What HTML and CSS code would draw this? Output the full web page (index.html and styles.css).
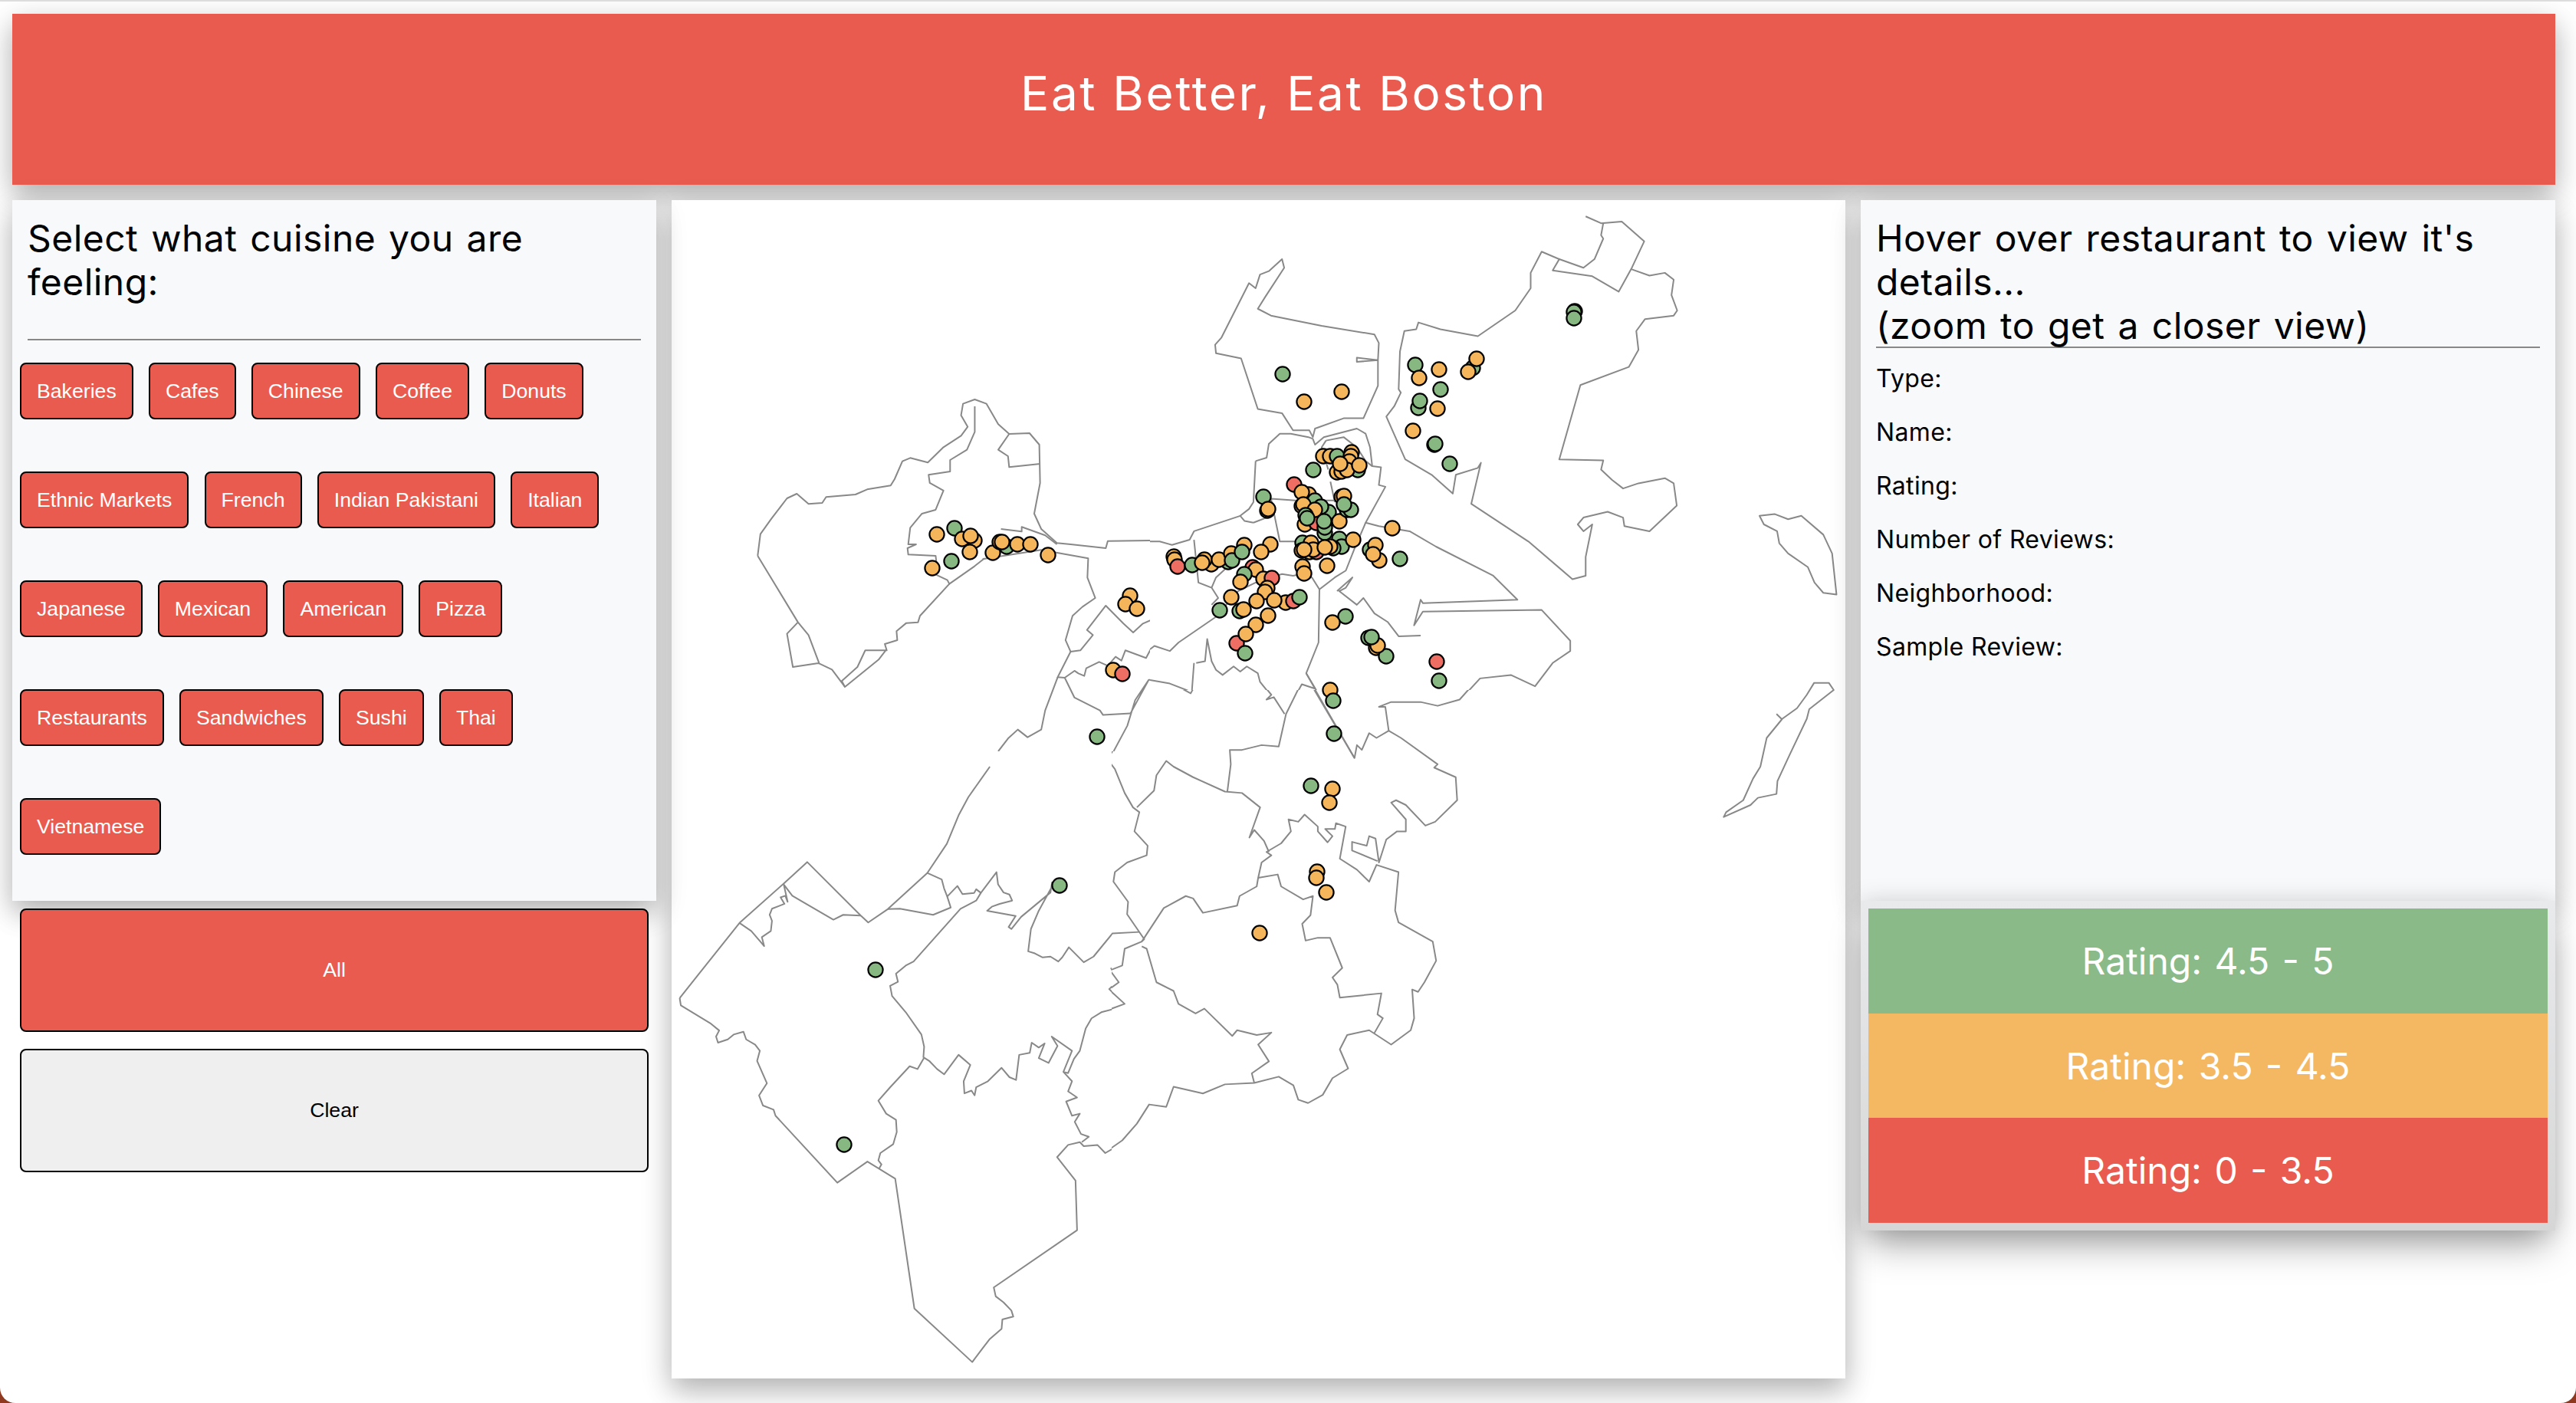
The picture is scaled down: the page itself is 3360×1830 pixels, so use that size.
FILE: index.html
```html
<!DOCTYPE html>
<html lang="en">
<head>
<meta charset="utf-8">
<title>Eat Better, Eat Boston</title>
<link rel="stylesheet" href="styles.css">
</head>
<body>
<header class="banner"><h1 class="banner-title">Eat Better, Eat Boston</h1></header>
<main class="layout">
  <section class="col">
    <div class="panel cuisine">
      <h2 class="panel-title">Select what cuisine you are feeling:</h2>
      <hr class="rule cuisine-rule">
      <div class="chips">
        <button class="chip">Bakeries</button><button class="chip">Cafes</button><button class="chip">Chinese</button><button class="chip">Coffee</button><button class="chip">Donuts</button>
        <button class="chip">Ethnic Markets</button><button class="chip">French</button><button class="chip">Indian Pakistani</button><button class="chip">Italian</button>
        <button class="chip">Japanese</button><button class="chip">Mexican</button><button class="chip">American</button><button class="chip">Pizza</button>
        <button class="chip">Restaurants</button><button class="chip">Sandwiches</button><button class="chip">Sushi</button><button class="chip">Thai</button>
        <button class="chip">Vietnamese</button>
      </div>
    </div>
    <div class="actions">
      <button class="action action-all">All</button>
      <button class="action action-clear">Clear</button>
    </div>
  </section>
  <section class="map">
    <svg class="map-svg" viewBox="876 261 1531 1537" xmlns="http://www.w3.org/2000/svg">
      <defs>
        <clipPath id="clip-sw"><rect x="860" y="980" width="590" height="830"/></clipPath>
        <clipPath id="clip-se"><rect x="1500" y="900" width="900" height="900"/><rect x="1450" y="980" width="60" height="830"/><rect x="2200" y="850" width="200" height="100"/></clipPath>
        <clipPath id="clip-w"><rect x="880" y="480" width="620" height="500"/></clipPath>
        <clipPath id="clip-ne"><rect x="1500" y="270" width="900" height="630"/></clipPath>
      </defs>
      <g clip-path="url(#clip-sw)"><g transform="translate(860 1000) scale(.5102 .5294)">
        <path class="line" d="M52 570 205 385 318 288 378 235 515 367 534 384 584 351 685 262 735 190 765 120 790 75 845 0"/>
        <path class="line" d="M685 262 722 278 728 300 736 320 762 294 775 314 805 311 810 302 822 311 862 260 866 290 880 310 895 315 902 330 870 338 850 345 838 355 911 368 893 395 900 400 925 370 1000 310 1004 285 1004 295 970 355 950 400 943 455 960 460 980 470 1000 468 1020 480 1030 470 1047 445 1085 482 1110 468 1162 407 1195 411 1228 407 1198 365 1200 345 1185 310 1160 280 1170 255 1205 230 1240 215 1247 195 1220 175 1215 150 1228 110 1218 100 1200 95 1190 65 1162 10"/>
        <path class="line" d="M1228 407 1238 425 1220 440 1185 455 1183 490 1155 497 1172 528 1150 548 1190 585 1170 595 1130 605 1105 620 1090 645 1075 700 1060 720 1045 755 1033 752 1055 700 1003 665 1018 688 995 730 970 718 985 682 970 692 952 680 947 705 920 710 912 772 895 765 875 742 840 775 810 790 806 810 798 798 780 805 778 775 795 735 765 710 728 758 710 745 690 725 677 717 660 745 640 738 590 790 560 823 580 855 605 870 607 900 598 930 565 952 560 970 568 980 562 990"/>
        <path class="line" d="M52 570 55 588 130 632 153 650 145 665 150 680 175 672 190 660 215 653 222 672 245 685 257 700 250 725 275 780 255 810 265 835 292 845 297 860 455 1025 532 973 603 1015 652 1335 800 1467 825 1435 845 1410 875 1385 877 1362 905 1355 900 1340 880 1320 860 1305 855 1283 1068 1142 1064 1020 1017 962 1045 932 1075 925 1085 935 1120 932 1140 952 1170 935 1210 895 1225 870 1250 832 1280 835 1303 840 1310 795 1330 790 1395 805 1450 785 1500 775 1520 780 1568 770"/>
        <path class="line" d="M1033 752 1055 775 1045 800 1068 815 1040 825 1055 860 1075 855 1062 875 1078 905 1098 912 1080 925"/>
        <path class="line" d="M675 717 677 690 670 660 630 605 595 565 590 540 610 530 605 510 630 490 650 480 770 350 810 330 822 311"/>
        <path class="line" d="M205 385 235 405 262 435 268 442 262 420 285 405 288 380 282 365 288 350 320 338 310 322 322 318 328 333 318 290 340 318 365 332 445 377 470 365 515 367"/>
        <path class="line" d="M584 351 615 350 700 365 745 347 736 320"/>
        <path class="line" d="M1185 452 1220 442 1240 445 1270 535 1295 540 1315 550 1320 575 1350 600 1380 605 1395 595 1400 620 1460 665 1478 650 1525 655 1565 655"/>
        <path class="line" d="M1238 425 1290 350 1350 318 1385 360 1415 357 1480 340 1490 315 1525 300 1530 258 1563 230 1550 208 1568 208"/>
        <path class="line" d="M1510 172 1525 155 1545 180 1555 205M1538 103 1510 172M1450 60 1462 65 1490 75 1538 103M1450 60 1455 25 1462 0M1295 0 1285 20 1262 50 1250 80 1220 100M1300 0 1330 10 1400 30 1450 60M1530 275 1568 268M1568 685 1530 685 1530 705 1555 730 1545 750 1515 760 1520 780"/>
      </g></g>
      <g clip-path="url(#clip-se)"><g transform="translate(1400 850) scale(.6378 .625)">
        <path class="line" d="M0 1025 30 1030 65 1045 100 1020 130 985 155 945 190 950 205 908 265 922 310 903 370 900 420 887 450 905 460 935 480 942 510 925 530 890 562 870 545 830 560 800 605 790 650 820 690 790 697 765 693 705 705 710 718 690 742 645 735 605 665 565 658 540 665 460 620 445 605 480 580 455 545 432 557 365 537 358 535 370 515 370 530 385 520 398 500 375 500 365 473 340 460 355 440 350 445 375 425 400 395 418 405 425 385 440 378 472 418 465 425 490 470 517 490 510 485 550 468 568 475 603 500 597 525 597 550 660 530 680 540 695 545 722 630 713 622 757 633 765 615 797"/>
        <path class="line" d="M378 472 375 490 340 510 335 530 265 545 245 515 230 510 185 535 140 605 145 600 110 548 112 522 82 480 85 460 110 440 150 425 152 405 125 375 135 335 122 325 105 295 85 245 70 225 105 165 118 130"/>
        <path class="line" d="M140 605 105 620 100 655 75 665 93 690 73 705 105 735 65 750 35 770 25 790 10 830 0 860"/>
        <path class="line" d="M140 615 150 620 170 690 205 708 215 735 250 755 268 745 325 802 335 790 375 800 405 795 378 820 400 855 365 880 370 900"/>
        <path class="line" d="M0 628 20 648 80 588 135 585"/>
        <path class="line" d="M130 325 165 290 170 258 190 228 205 240 245 262 310 292 345 295 382 325 360 388 370 372 390 395 400 418"/>
        <path class="line" d="M315 292 322 235 320 205 345 205 385 195 420 198 435 130 465 68 490 75 575 222"/>
        <path class="line" d="M475 45 495 0M475 45 575 222 580 195 590 205 605 170 620 180 645 165 638 115 625 115 650 105 710 105 745 113 790 100 825 60 860 45 945 72 970 30 1000 0"/>
        <path class="line" d="M645 165 670 180 745 235 738 242 782 262 785 310 740 355 720 363 680 320 660 310 650 315 680 350 680 375 662 375 640 392 625 440 618 390 605 385 600 405 570 397 570 415 622 437"/>
        <path class="line" d="M1330 345 1385 320 1400 305 1438 297 1440 270 1465 215 1500 140 1505 120 1530 100 1555 80 1545 65 1515 65 1500 90 1480 118 1450 140 1418 180 1405 240 1390 265 1370 310 1335 335ZM1448 140 1438 130"/>
        <path class="line" d="M118 130 130 80 155 60 200 65 240 87 260 50 272 25 295 45 330 30 345 35 365 30 385 50 385 65 405 90 395 100 410 95 432 130"/>
        <path class="line" d="M0 95 30 120 60 130 115 128"/>
        <path class="line" d="M0 45 25 45 55 20 90 15 105 0"/>
      </g></g>
      <g clip-path="url(#clip-w)"><g transform="translate(950 480) scale(.5102 .3333)">
        <path class="line" d="M75 735 82 650 110 590 150 510 175 492 205 532 240 528 250 505 325 495 355 475 415 460 425 435 445 365 465 352 510 370 550 310 595 265 612 230 595 185 600 140 630 123 660 140 690 220 718 258 770 255 795 300 797 450 782 570 800 630 840 685 875 690 965 705 970 677 1100 675 1105 690 1135 688 1195 660 1305 580 1340 520 1345 380 1375 345 1365 300 1385 255"/>
        <path class="line" d="M718 258 690 320 715 345 718 388 797 375"/>
        <path class="line" d="M630 150 630 250 610 320 567 360 567 405 512 418 515 450 550 480 530 555 495 570 465 625 460 690 480 690 458 705 460 730 530 735 533 775 505 790 560 830 565 845 630 775 655 745"/>
        <path class="line" d="M697 630 750 640 750 622 810 655 840 690M650 748 800 712 920 745 918 820 938 900 905 935 880 970 862 1065 875 1110 900 1105 932 1045 917 1025 965 930 1010 1000 1035 1035 1060 1000 1105 970 1125 830 1160 815 1130 700"/>
        <path class="line" d="M565 845 490 970 485 995 455 998 430 1030 432 1065 400 1080 405 1105 375 1105 350 1105 330 1170 290 1225 298 1248 385 1140 405 1100"/>
        <path class="line" d="M75 735 178 995 150 1040 165 1170 230 1155 265 1180 298 1248M178 995 205 1045 232 1155"/>
        <path class="line" d="M875 1110 842 1210 860 1212 885 1185 895 1195 910 1205 915 1175 948 1150 970 1165 990 1130 1005 1145 1015 1105 1068 1135 1085 1085 1125 1110 1190 1025 1255 925 1290 840"/>
        <path class="line" d="M860 1212 885 1290 950 1340 958 1358 1028 1352M842 1210 810 1340 800 1415 765 1445 740 1415 715 1450 690 1500"/>
        <path class="line" d="M1028 1352 1075 1220 1135 1225 1185 1275 1200 1215 1190 1190 1210 1150 1245 1170 1262 1207 1295 1165 1305 1185 1325 1170 1340 1165 1365 1220 1410 1330 1425 1355 1405 1480M1075 1220 1040 1300 1020 1400 985 1500"/>
        <path class="line" d="M1190 1025 1155 1065 1160 1090 1200 1045 1220 1065 1240 1135 1245 1170"/>
      </g></g>
      <g clip-path="url(#clip-ne)"><g transform="translate(1500 280) scale(.574 .4464)">
        <path class="line" d="M300 130 305 155 262 240 245 275 275 295 390 325 510 350 520 375 518 425 470 430 470 418 518 425 518 500 485 595 440 595 375 625 370 650 362 630 325 630 300 580 245 568 207 420 150 405 148 380 162 360 225 200 240 215 250 175 270 165Z"/>
        <path class="line" d="M990 5 1025 25 1072 20 1123 78 1095 155 1065 225 1005 180 915 163 930 130 890 108 865 170 865 215 830 280 745 355 660 335 610 315 605 335 578 340 568 400 565 510 570 520 555 560 537 590 580 715 640 760 688 815 695 760 745 740 752 725 730 845 860 955 960 1065 990 1055 990 1000 1005 905 985 925 972 905 985 885 1040 868 1075 885 1078 910 1135 925 1197 850 1190 785 1170 770 1110 785 1075 800 1050 775 1025 745 1030 718 930 715 978 498 1088 445 1110 395 1105 340 1125 305 1190 295 1198 280 1185 235 1190 190 1170 170 1135 178 1095 160"/>
        <path class="line" d="M1030 25 1025 60 1030 70 1010 130 985 155 930 130"/>
        <path class="line" d="M240 720 265 710 270 670 295 640 320 640 360 650 370 655 375 672 395 650 470 625 490 640 500 680 505 735 525 738 520 790 535 795 490 900 520 910 590 925 650 970 780 1055 835 1125 620 1135 615 1125 600 1200 620 1160 890 1155 955 1245 955 1275 915 1310 875 1378 820 1345 750 1355 700 1425 655 1435 600 1420 530 1435 540 1500 520 1530 505 1520 490 1550 465 1568"/>
        <path class="line" d="M490 900 465 975 445 1040 420 1060 385 1095 368 1060 345 1050 325 1055 300 1050 275 1060 270 1085 240 1075 200 1100 150 1175 65 1250 45 1275 10 1260 0 1270"/>
        <path class="line" d="M1385 880 1420 875 1450 890 1480 880 1530 935 1550 990 1560 1110 1530 1105 1510 1075 1495 1030 1450 990 1430 960 1425 925 1395 905Z"/>
        <path class="line" d="M400 660 440 650 470 680 490 720 505 735M400 660 390 680 405 745M410 780 420 840M275 830 330 835 420 835M275 830 295 955 330 955M235 900 275 880M240 720 235 840 225 860 205 880 215 895 235 900"/>
        <path class="line" d="M205 880 100 925 90 950 50 965 22 955 0 955M100 950 110 1075 140 1090 150 1060 205 995M140 1090 155 1120 140 1140"/>
        <path class="line" d="M385 1095 383 1250 355 1340 375 1385 345 1372 310 1455 295 1545 240 1560 185 1568"/>
        <path class="line" d="M100 1310 95 1395 45 1370 0 1360M105 1310 125 1305 130 1240 140 1305 150 1330 165 1345 190 1320 205 1335 220 1320 245 1340 250 1365 275 1405 265 1410 280 1420 295 1455"/>
        <path class="line" d="M355 1340 460 1568M425 1100 460 1060 445 1090 430 1100 470 1140 485 1120 510 1165 540 1190 565 1232 615 1230"/>
      </g></g>
      <g class="dots">
        <circle class="o" cx="1222" cy="697"/><circle class="g" cx="1245" cy="689"/><circle class="o" cx="1271" cy="705"/><circle class="o" cx="1255" cy="703"/><circle class="o" cx="1266" cy="699"/><circle class="o" cx="1265" cy="720"/><circle class="g" cx="1241" cy="732"/><circle class="o" cx="1216" cy="741"/><circle class="g" cx="1313" cy="713"/><circle class="o" cx="1295" cy="721"/><circle class="o" cx="1304" cy="707"/><circle class="o" cx="1307" cy="707"/><circle class="o" cx="1327" cy="710"/><circle class="o" cx="1344" cy="710"/><circle class="o" cx="1367" cy="724"/>
        <circle class="o" cx="1474" cy="777"/><circle class="o" cx="1468" cy="788"/><circle class="o" cx="1483" cy="794"/>
        <circle class="o" cx="1452" cy="874"/><circle class="r" cx="1464" cy="879"/><circle class="g" cx="1431" cy="961"/>
        <circle class="g" cx="1382" cy="1155"/><circle class="g" cx="1142" cy="1265"/><circle class="g" cx="1101" cy="1493"/>
        <circle class="g" cx="1673" cy="488"/><circle class="o" cx="1701" cy="524"/><circle class="o" cx="1750" cy="511"/>
        <circle class="g" cx="1846" cy="476"/><circle class="o" cx="1851" cy="493"/><circle class="o" cx="1877" cy="482"/><circle class="g" cx="1879" cy="508"/><circle class="g" cx="1921" cy="480"/><circle class="o" cx="1915" cy="485"/><circle class="o" cx="1926" cy="468"/><circle class="g" cx="1850" cy="532"/><circle class="g" cx="1852" cy="523"/><circle class="o" cx="1875" cy="533"/><circle class="o" cx="1843" cy="562"/><circle class="o" cx="1871" cy="580"/><circle class="g" cx="1872" cy="579"/><circle class="g" cx="1891" cy="605"/>
        <circle class="o" cx="2054" cy="406"/><circle class="g" cx="2053" cy="407"/><circle class="g" cx="2053" cy="415"/>
        <circle class="r" cx="1874" cy="863"/><circle class="g" cx="1877" cy="888"/>
        <circle class="o" cx="1735" cy="900"/><circle class="g" cx="1739" cy="914"/><circle class="g" cx="1740" cy="957"/>
        <circle class="g" cx="1710" cy="1025"/><circle class="o" cx="1738" cy="1029"/><circle class="o" cx="1734" cy="1047"/><circle class="o" cx="1718" cy="1137"/><circle class="o" cx="1717" cy="1145"/><circle class="o" cx="1730" cy="1164"/><circle class="o" cx="1643" cy="1217"/>
        <circle class="o" cx="1531" cy="726"/><circle class="o" cx="1532" cy="730"/><circle class="r" cx="1536" cy="739"/>
        <circle class="g" cx="1555" cy="737"/><circle class="o" cx="1580" cy="736"/><circle class="o" cx="1571" cy="730"/><circle class="o" cx="1568" cy="734"/><circle class="g" cx="1602" cy="733"/><circle class="o" cx="1590" cy="730"/><circle class="o" cx="1606" cy="722"/><circle class="o" cx="1623" cy="711"/><circle class="g" cx="1607" cy="731"/><circle class="g" cx="1620" cy="720"/><circle class="o" cx="1657" cy="710"/><circle class="o" cx="1645" cy="720"/>
        <circle class="g" cx="1648" cy="648"/><circle class="o" cx="1653" cy="666"/><circle class="o" cx="1654" cy="664"/>
        <circle class="r" cx="1634" cy="740"/><circle class="o" cx="1638" cy="743"/><circle class="g" cx="1623" cy="749"/><circle class="o" cx="1618" cy="759"/><circle class="o" cx="1648" cy="755"/><circle class="r" cx="1659" cy="754"/><circle class="o" cx="1653" cy="767"/><circle class="o" cx="1650" cy="772"/><circle class="o" cx="1639" cy="784"/><circle class="o" cx="1606" cy="779"/><circle class="g" cx="1591" cy="796"/><circle class="g" cx="1617" cy="797"/><circle class="o" cx="1622" cy="795"/><circle class="o" cx="1677" cy="786"/><circle class="r" cx="1687" cy="784"/><circle class="g" cx="1695" cy="779"/><circle class="o" cx="1662" cy="783"/><circle class="o" cx="1654" cy="803"/><circle class="o" cx="1638" cy="815"/><circle class="r" cx="1613" cy="839"/><circle class="o" cx="1625" cy="827"/><circle class="g" cx="1624" cy="852"/>
        <circle class="o" cx="1726" cy="595"/><circle class="o" cx="1735" cy="595"/><circle class="g" cx="1744" cy="595"/><circle class="o" cx="1763" cy="590"/><circle class="o" cx="1762" cy="595"/><circle class="g" cx="1771" cy="613"/><circle class="o" cx="1744" cy="616"/><circle class="o" cx="1750" cy="615"/><circle class="o" cx="1760" cy="602"/><circle class="o" cx="1757" cy="613"/><circle class="o" cx="1773" cy="607"/><circle class="o" cx="1748" cy="605"/>
        <circle class="g" cx="1713" cy="613"/>
        <circle class="r" cx="1688" cy="632"/><circle class="o" cx="1707" cy="645"/><circle class="o" cx="1698" cy="642"/>
        <circle class="o" cx="1698" cy="660"/><circle class="g" cx="1715" cy="653"/><circle class="o" cx="1700" cy="658"/><circle class="g" cx="1733" cy="668"/><circle class="o" cx="1702" cy="684"/><circle class="r" cx="1717" cy="682"/><circle class="g" cx="1728" cy="695"/><circle class="g" cx="1728" cy="688"/><circle class="o" cx="1747" cy="680"/><circle class="g" cx="1723" cy="661"/><circle class="o" cx="1715" cy="665"/><circle class="g" cx="1703" cy="672"/><circle class="g" cx="1705" cy="676"/><circle class="g" cx="1727" cy="680"/>
        <circle class="o" cx="1750" cy="648"/><circle class="o" cx="1753" cy="647"/><circle class="g" cx="1757" cy="665"/><circle class="g" cx="1762" cy="665"/><circle class="g" cx="1753" cy="658"/>
        <circle class="g" cx="1699" cy="708"/><circle class="o" cx="1710" cy="708"/><circle class="g" cx="1747" cy="703"/><circle class="g" cx="1750" cy="713"/><circle class="g" cx="1739" cy="715"/><circle class="o" cx="1698" cy="718"/><circle class="o" cx="1708" cy="720"/><circle class="r" cx="1717" cy="720"/><circle class="o" cx="1713" cy="717"/><circle class="o" cx="1701" cy="717"/><circle class="o" cx="1735" cy="713"/><circle class="o" cx="1728" cy="714"/><circle class="o" cx="1765" cy="704"/>
        <circle class="o" cx="1816" cy="689"/><circle class="g" cx="1787" cy="717"/><circle class="o" cx="1794" cy="711"/><circle class="o" cx="1799" cy="731"/><circle class="o" cx="1791" cy="723"/><circle class="g" cx="1826" cy="729"/>
        <circle class="o" cx="1731" cy="738"/><circle class="o" cx="1699" cy="739"/><circle class="o" cx="1701" cy="748"/>
        <circle class="g" cx="1755" cy="804"/><circle class="o" cx="1738" cy="812"/><circle class="g" cx="1785" cy="832"/><circle class="o" cx="1795" cy="845"/><circle class="g" cx="1808" cy="856"/><circle class="o" cx="1797" cy="842"/><circle class="g" cx="1789" cy="831"/>
      </g>
    </svg>
  </section>
  <section class="col">
    <div class="panel details">
      <h2 class="panel-title">Hover over restaurant to view it's details...<br>(zoom to get a closer view)</h2>
      <hr class="rule details-rule">
      <p class="field">Type:</p>
      <p class="field">Name:</p>
      <p class="field">Rating:</p>
      <p class="field">Number of Reviews:</p>
      <p class="field">Neighborhood:</p>
      <p class="field">Sample Review:</p>
    </div>
    <div class="legend">
      <div class="legend-row legend-high">Rating: 4.5 - 5</div>
      <div class="legend-row legend-mid">Rating: 3.5 - 4.5</div>
      <div class="legend-row legend-low">Rating: 0 - 3.5</div>
    </div>
  </section>
</main>
</body>
</html>
```
FILE: styles.css
```css
* { box-sizing: border-box; }
html { height: 100%; background: #8f3a20; }
body {
  margin: 0;
  height: 1830px;
  overflow: hidden;
  background: #fff;
  border-top: 2px solid #ddd;
  border-radius: 0 0 20px 20px;
  font-family: Inter, "Open Sans", sans-serif;
  color: #000;
}
.banner {
  margin: 16px 27px 0 16px;
  height: 223px;
  padding-bottom: 16px;
  background: #ea5b4f;
  display: flex;
  align-items: center;
  justify-content: center;
  box-shadow: 0 16px 32px rgba(0,0,0,.18), 0 12px 40px rgba(0,0,0,.16);
}
.banner-title {
  margin: 0;
  font-size: 62px;
  font-weight: 400;
  color: #fff;
  letter-spacing: 2.6px;
}
.layout {
  display: grid;
  grid-template-columns: 840px 1531px 906px;
  column-gap: 20px;
  margin: 20px 27px 0 16px;
}
.col { display: flex; flex-direction: column; position: relative; }
.panel {
  background: #f8f9fb;
  height: 914px;
  box-shadow: 0 16px 32px rgba(0,0,0,.18), 0 12px 40px rgba(0,0,0,.16);
}
.panel-title {
  margin: 0;
  font-size: 48px;
  line-height: 57px;
  font-weight: 400;
  letter-spacing: .45px;
  word-spacing: 3px;
}
.cuisine { padding: 21px 20px 0 0; }
.cuisine .panel-title { padding-left: 20px; }
.rule { border: 0; height: 2px; background: #888; margin: 0; }
.cuisine-rule { margin: 46px 0 29px 20px; }
.chips {
  display: flex;
  flex-wrap: wrap;
  column-gap: 20.25px;
  row-gap: 68px;
  padding-left: 10px;
}
.chip {
  height: 74px;
  padding: 0 20px;
  font-family: "Liberation Sans", Arial, sans-serif;
  font-size: 26.67px;
  color: #fff;
  background: #ea5b4f;
  border: 2px solid #000;
  border-radius: 8px;
}
.actions { display: flex; flex-direction: column; gap: 22px; padding: 10px 10px 0; }
.action {
  height: 161px;
  width: 820px;
  font-family: "Liberation Sans", Arial, sans-serif;
  font-size: 26.67px;
  border: 2px solid #000;
  border-radius: 8px;
}
.action-all { background: #ea5b4f; color: #fff; }
.action-clear { background: #efefef; color: #000; }
.map {
  height: 1537px;
  background: #fff;
  box-shadow: 0 16px 32px rgba(0,0,0,.18), 0 12px 40px rgba(0,0,0,.16);
}
.map-svg { display: block; width: 1531px; height: 1537px; }
.line {
  fill: none;
  stroke: #888;
  stroke-width: 2px;
  stroke-linejoin: round;
  vector-effect: non-scaling-stroke;
}
.dots circle { r: 9.6px; stroke: #000; stroke-width: 2.2px; }
.dots .g { fill: #88b882; }
.dots .o { fill: #f5b55b; }
.dots .r { fill: #ee6e64; }
.details { padding: 21px 20px 0 20px; }
.details-rule { margin: -1px 0 5px; }
.field {
  margin: 0;
  font-size: 32px;
  line-height: 70px;
  letter-spacing: .35px;
}
.legend {
  height: 430px;
  padding: 10px;
  background: linear-gradient(#e9eaec, #d6d6d6);
  box-shadow: 0 28px 44px -10px rgba(0,0,0,.35), 0 0 30px rgba(0,0,0,.15);
  display: flex;
  flex-direction: column;
}
.legend-row {
  flex: 1;
  display: flex;
  align-items: center;
  justify-content: center;
  color: #fff;
  font-size: 48px;
  word-spacing: 3px;
}
.legend-high { background: #8aba87; }
.legend-mid { background: #f5b862; }
.legend-low { background: #ea5b4f; }
```
